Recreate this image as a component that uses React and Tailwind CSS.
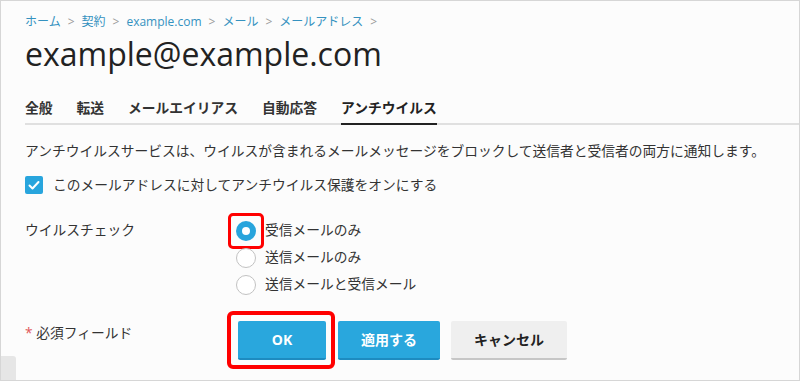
const crumbs = ['ホーム', '契約', 'example.com', 'メール', 'メールアドレス'];
const tabs = ['全般', '転送', 'メールエイリアス', '自動応答', 'アンチウイルス'];
const options = ['受信メールのみ', '送信メールのみ', '送信メールと受信メール'];

function Radio({ checked }) {
  if (checked) {
    return (
      <span className="w-5 h-5 rounded-full bg-[#28a4dc] flex items-center justify-center">
        <span className="w-[8px] h-[8px] rounded-full bg-white" />
      </span>
    );
  }
  return <span className="w-5 h-5 rounded-full border border-[#c2c2c2] bg-white" />;
}

export default function App() {
  return (
    <div className="relative w-[800px] h-[381px] overflow-hidden border border-[#d6d6d6] bg-[#fcfcfc] text-[#333] font-['Open_Sans','Noto_Sans_CJK_JP',sans-serif]">
      <div className="pl-6 pt-[13px]">
        <nav className="flex items-center h-4 text-[12px] leading-4">
          {crumbs.map((c) => (
            <span key={c} className="flex items-center">
              <span className="text-[#3592c0]">{c}</span>
              <span className="mx-[7px] text-[#9a9a9a]">&gt;</span>
            </span>
          ))}
        </nav>

        <h1 className="mt-1 text-[32px] leading-[39px] font-normal text-[#222]">example@example.com</h1>

        <div className="mt-[25px] flex gap-6 border-b-2 border-[#e0e0e0] text-[13.75px] font-bold text-[#333]">
          {tabs.map((t, i) => (
            <div
              key={t}
              className={
                i === tabs.length - 1
                  ? 'pb-[5px] leading-5 -mb-[2px] border-b-2 border-[#222] text-[#222]'
                  : 'pb-[5px] leading-5'
              }
            >
              {t}
            </div>
          ))}
        </div>

        <p className="mt-4 text-[13.75px] leading-5">
          アンチウイルスサービスは、ウイルスが含まれるメールメッセージをブロックして送信者と受信者の両方に通知します。
        </p>

        <div className="mt-[15px] flex items-center gap-[10px] h-[18px] text-[13.75px]">
          <span className="w-[18px] h-[18px] rounded-[2px] bg-[#28a5dd] flex items-center justify-center">
            <svg width="14" height="14" viewBox="0 0 14 14" fill="none">
              <path d="M2.5 7.5l3 3 6-6.5" stroke="white" strokeWidth="2" strokeLinecap="round" strokeLinejoin="round" />
            </svg>
          </span>
          <span>このメールアドレスに対してアンチウイルス保護をオンにする</span>
        </div>

        <div className="mt-[23px] grid grid-cols-[211px_1fr] text-[13.75px]">
          <div className="leading-[25px]">ウイルスチェック</div>
          <div className="flex flex-col">
            {options.map((o, i) => (
              <label key={o} className="h-[27px] flex items-center gap-[9px]">
                <span className="relative flex">
                  <Radio checked={i === 0} />
                  {i === 0 && (
                    <span className="absolute -inset-2 border-[3px] border-[#ff0000] rounded-[5px]" />
                  )}
                </span>
                <span>{o}</span>
              </label>
            ))}
          </div>
        </div>

        <div className="mt-[23px] grid grid-cols-[211px_1fr] text-[13.75px]">
          <div className="pt-[2px] leading-5">
            <span className="text-[#e0585a]">*</span> 必須フィールド
          </div>
          <div className="flex pl-[2px] font-bold text-[14px]">
            <span className="relative flex">
              <button className="w-[88px] h-[39px] bg-[#29a7dd] border-b-2 border-[#1d8bc0] text-white rounded-[2px]">
                OK
              </button>
              <span className="absolute -top-[10px] -bottom-[9px] -left-[11px] -right-[9px] border-4 border-[#ff0000] rounded-[6px]" />
            </span>
            <button className="ml-3 w-[102px] h-[39px] bg-[#29a7dd] border-b-2 border-[#1d8bc0] text-white rounded-[2px]">
              適用する
            </button>
            <button className="ml-[11px] w-[116px] h-[39px] bg-[#efefef] border-b-2 border-[#c6c6c6] text-[#222] rounded-[2px]">
              キャンセル
            </button>
          </div>
        </div>
      </div>

      <div className="absolute left-0 bottom-0 w-[15px] h-[24px] bg-[#e6e6e6] rounded-tr-[3px]" />
    </div>
  );
}
